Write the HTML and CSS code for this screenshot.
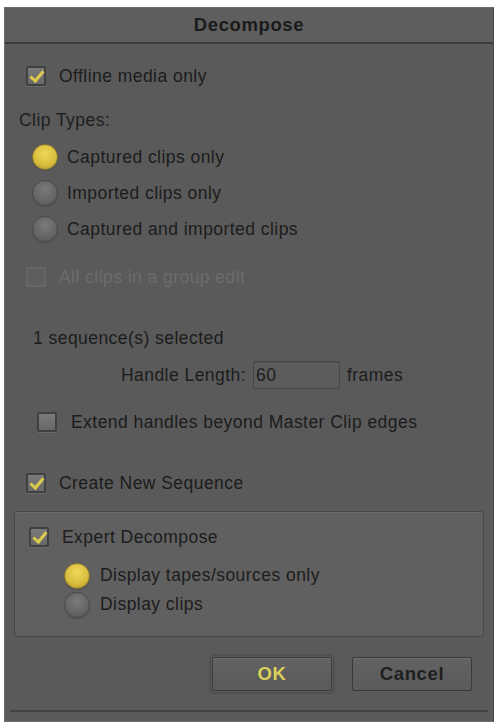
FILE: index.html
```html
<!DOCTYPE html>
<html>
<head>
    <title>Decompose</title>
    <link rel="stylesheet" href="styles.css">
</head>
<body>
    <div class="dialog">
        <div class="titlebar">Decompose</div>
        <div class="content">
            <label class="row row-offline">
                <span class="check on"></span>
                <span>Offline media only</span>
            </label>

            <div class="row heading">Clip Types:</div>
            <div class="radios">
                <label class="row radio-row"><span class="radio on"></span><span>Captured clips only</span></label>
                <label class="row radio-row"><span class="radio"></span><span>Imported clips only</span></label>
                <label class="row radio-row"><span class="radio"></span><span>Captured and imported clips</span></label>
            </div>

            <label class="row row-group disabled">
                <span class="check"></span>
                <span>All clips in a group edit</span>
            </label>

            <div class="row row-selected">1 sequence(s) selected</div>
            <div class="row row-handle">
                <span class="handle-label">Handle Length:</span>
                <span class="field">60</span>
                <span>frames</span>
            </div>

            <label class="row row-extend">
                <span class="check"></span>
                <span>Extend handles beyond Master Clip edges</span>
            </label>

            <label class="row row-create">
                <span class="check on"></span>
                <span>Create New Sequence</span>
            </label>

            <div class="groupbox">
                <label class="row row-expert">
                    <span class="check on"></span>
                    <span>Expert Decompose</span>
                </label>
                <div class="sub-radios">
                    <label class="row sub-row"><span class="radio on"></span><span>Display tapes/sources only</span></label>
                    <label class="row sub-row"><span class="radio"></span><span>Display clips</span></label>
                </div>
            </div>

            <div class="buttons">
                <button class="btn btn-ok">OK</button>
                <button class="btn">Cancel</button>
            </div>
        </div>
        <div class="footer"></div>
    </div>
</body>
</html>
```

FILE: styles.css
```css
html,
body {
	margin: 0;
	background: #fff;
}

body {
	font-family: "Liberation Sans", Arial, sans-serif;
	font-size: 17.5px;
	letter-spacing: 0.45px;
	color: #1c1c1c;
}

.dialog {
	margin: 7px 4px 0 4px;
	width: 490px;
	height: 715px;
	box-sizing: border-box;
	background: #5a5a5a;
	border: 1px solid #6c6c6c;
	border-right-color: #4a4a4a;
	display: flex;
	flex-direction: column;
}

.titlebar {
	height: 34px;
	line-height: 34px;
	text-align: center;
	font-weight: bold;
	font-size: 18.5px;
	letter-spacing: 0.6px;
	color: #1a1a1a;
	background: #5e5e5e;
	border-bottom: 2px solid #3e3e3e;
}

.content {
	flex: 1;
	padding: 0 8px 0 8px;
	display: flex;
	flex-direction: column;
}

.row {
	display: flex;
	align-items: center;
	gap: 13px;
}

/* vertical rhythm, measured from the reference */
.row-offline { margin-top: 20px; height: 24px; padding-left: 13px; }
.heading { margin-top: 22px; height: 20px; padding-left: 6px; color: #1e1e1e; }
.radios { margin-top: 9px; padding-left: 19px; }
.radio-row { height: 36px; gap: 9px; }
.row-group { margin-top: 18px; height: 24px; padding-left: 13px; }
.row-selected { margin-top: 39px; height: 20px; padding-left: 20px; }
.row-handle { margin-top: 12px; height: 30px; gap: 7px; }
.row-extend { margin-top: 20px; height: 24px; padding-left: 24px; gap: 14px; }
.row-create { margin-top: 37px; height: 24px; padding-left: 13px; }

.handle-label {
	width: 233px;
	text-align: right;
}

.disabled {
	color: #6c6c6c;
}

.disabled .check {
	border-color: #666;
	background: #5e5e5e;
	box-shadow: none;
}

.field {
	width: 87px;
	height: 28px;
	box-sizing: border-box;
	border: 1px solid #474747;
	border-radius: 2px;
	background: #5c5c5c;
	padding: 3px 0 0 2px;
	box-shadow: inset 0 1px 0 #505050;
}

/* checkbox */
.check {
	width: 20px;
	height: 20px;
	flex: none;
	box-sizing: border-box;
	border: 2px solid #404040;
	border-radius: 2px;
	background: linear-gradient(#7a7a7a, #686868);
	box-shadow: 0 1px 0 #6a6a6a;
	position: relative;
}

.check.on::after {
	content: "";
	position: absolute;
	left: 5px;
	top: 0px;
	width: 5px;
	height: 11px;
	border: solid #dccb4c;
	border-width: 0 3px 3px 0;
	transform: rotate(40deg);
}

/* radio */
.radio {
	width: 26px;
	height: 26px;
	flex: none;
	box-sizing: border-box;
	border-radius: 50%;
	border: 1px solid #4a4a4a;
	background: radial-gradient(circle at 50% 35%, #7a7a7a, #656565 60%, #555 100%);
	box-shadow: 0 1px 1px #4e4e4e;
}

.radio.on {
	border-color: #8a7a30;
	background: radial-gradient(circle at 50% 35%, #f0d858, #d8bb3c 60%, #a98f2c 100%);
}

/* expert group */
.groupbox {
	margin: 16px 1px 0 1px;
	height: 126px;
	box-sizing: border-box;
	border: 1px solid #474747;
	border-radius: 3px;
	background: #606060;
	box-shadow: inset 0 1px 0 #6a6a6a;
}

.row-expert { margin-top: 13px; height: 24px; padding-left: 14px; gap: 13px; }
.sub-radios { margin-top: 12px; padding-left: 49px; }
.sub-row { height: 29px; gap: 10px; }

/* buttons */
.buttons {
	margin-top: 20px;
	display: flex;
	justify-content: flex-end;
	gap: 20px;
	padding-right: 13px;
}

.btn {
	width: 120px;
	height: 34px;
	font-family: inherit;
	font-size: 18.5px;
	letter-spacing: 0.6px;
	font-weight: bold;
	color: #1e1e1e;
	background: linear-gradient(#626262, #5a5a5a);
	border: 1px solid #3a3a3a;
	border-radius: 2px;
	box-shadow: inset 0 1px 0 #6e6e6e;
}

.btn-ok {
	color: #dcd05a;
	outline: 2px solid #505050;
	outline-offset: 1px;
}

.footer {
	margin: 0 5px 9px 5px;
	border-bottom: 2px solid #424242;
}
```
